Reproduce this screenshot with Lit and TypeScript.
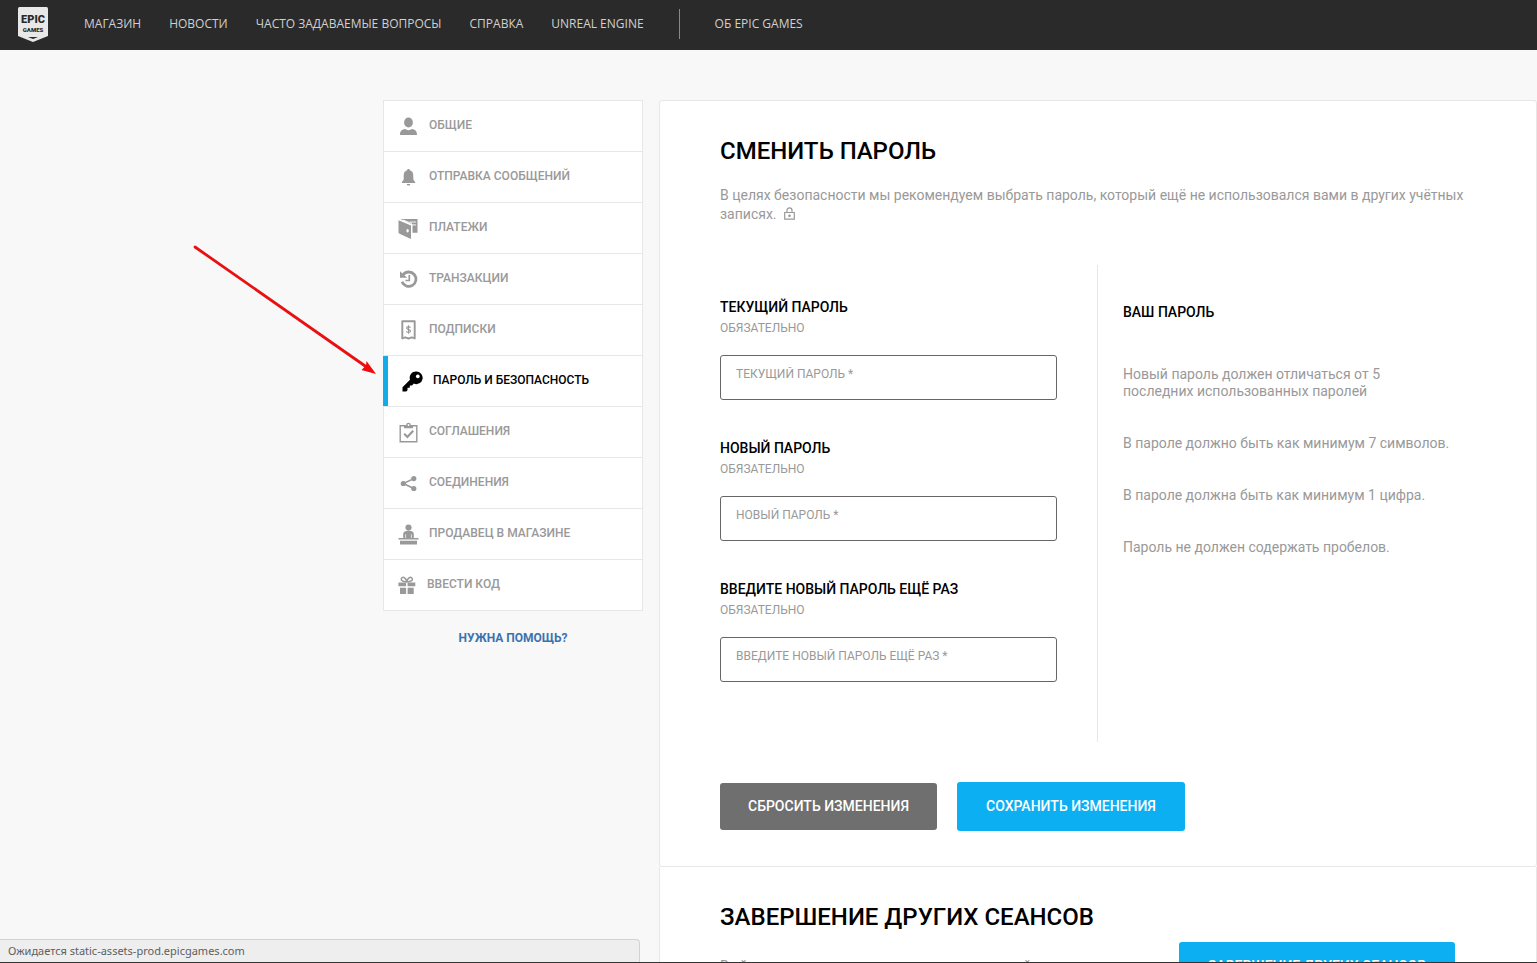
import { LitElement, html, svg, css } from "lit";
import { customElement } from "lit/decorators.js";
import { classMap } from "lit/directives/class-map.js";

const icons: Record<string, unknown> = {
  user: svg`<ellipse cx="10.5" cy="6.500" rx="4.400" ry="5"/><path d="M2 19c0-4 2.200-5.600 5-5.900 2 1.400 5 1.400 7 0 2.800.3 5 1.900 5 5.900z"/>`,
  bell: svg`<path d="M10.500 2c-.8 0-1.300.5-1.300 1.200C6.800 3.800 5.700 5.800 5.700 8.500v4L3.800 15.200v.8h13.400v-.8l-1.900-2.700v-4c0-2.700-1.100-4.700-3.500-5.300 0-.7-.5-1.200-1.300-1.200zM8.800 17h3.400c0 1-.7 1.500-1.700 1.500s-1.700-.5-1.700-1.500z"/>`,
  wallet: svg`<path d="M.5 2.300 13 7.600V21L1.500 15.800.5 14.500z"/><path d="M2.500 1h17v13.800h-5V6.600z"/><path d="M5 1.900 14 5.600M12 4h6M14 6.900h4" stroke="#fff" stroke-width=".9" fill="none"/><ellipse cx="9.600" cy="12.700" rx="1.200" ry="1.700" fill="#fff"/>`,
  history: svg`<path d="M5.200 5.600A7.200 7.200 0 1 1 4 12.700" fill="none" stroke="currentColor" stroke-width="2.800"/><path d="M2 2.300v6.500h7.200z"/><path d="M11.300 6v5.500H7.500" fill="none" stroke="currentColor" stroke-width="1.700"/>`,
  receipt: svg`<path d="M4.300 1.300h12.400v17.200l-2.800-1.200-3.400 1.200-3.400-1.200-2.800 1.200z" fill="none" stroke="currentColor" stroke-width="1.900" stroke-linejoin="round"/><path d="M12.400 7.800c-.3-.9-.9-1.200-1.900-1.200-1.200 0-1.900.5-1.900 1.400 0 2.200 3.900 1 3.900 3.100 0 .9-.8 1.400-2 1.400-1.100 0-1.800-.4-2.100-1.300M10.500 5.300v8.500" fill="none" stroke="currentColor" stroke-width="1.100"/>`,
  key: svg`<path fill-rule="evenodd" d="M14.200.5a6.300 6.300 0 1 1-2.300 12.100L10 14.500H7.800v2.300H5.500v2.400L4.200 20.500H.5v-4.200L8 8.800A6.300 6.300 0 0 1 14.200.5zm1.600 3a1.900 1.900 0 1 0 .01 0z"/>`,
  clipboard: svg`<path d="M2.200 3.700h16.600v16.100H2.200z" fill="none" stroke="currentColor" stroke-width="1.400"/><path d="M6 3h2.200a2.300 2.300 0 0 1 4.600 0H15v3.200H6z"/><circle cx="10.500" cy="3" r=".9" fill="#fff"/><path d="m6.200 11.800 3.200 3.200 5.800-6.300" fill="none" stroke="currentColor" stroke-width="2.200"/>`,
  share: svg`<circle cx="5.300" cy="10.500" r="2.600"/><circle cx="15.800" cy="5.600" r="2.600"/><circle cx="15.800" cy="15.500" r="2.600"/><path d="M15.800 5.600 5.300 10.500l10.500 5" fill="none" stroke="currentColor" stroke-width="1.600"/>`,
  seller: svg`<circle cx="10.500" cy="3.600" r="3.100"/><path d="M5.200 14.500V10c0-2 1.600-3 3.300-3h4c1.700 0 3.300 1 3.300 3v4.500z"/><path d="M7.600 10.300v4M13.400 10.300v4" stroke="#fff" stroke-width=".7"/><path d="M.5 14h20v1.600h-20zM2 16.800h17v3.700H2z"/>`,
  gift: svg`<path d="M.4 7.500h7.700v3.800H.4zM9.600 7.500h7.700v3.800H9.600zM2 12.700h6.100v6.200H2zM9.600 12.700h6.100v6.200H9.600z"/><path d="M8.800 6.900C4.500 6.900 3 5.500 3.300 3.800 3.700 1.500 7.800 1.500 8.800 6.900zm0 0c4.300 0 5.800-1.400 5.500-3.100C13.900 1.500 9.800 1.500 8.800 6.900z" fill="none" stroke="currentColor" stroke-width="1.500"/>`,
};

const navLinks = ["Магазин", "Новости", "Часто задаваемые вопросы", "Справка", "Unreal Engine"];

const menu = [
  { icon: "user", label: "Общие" },
  { icon: "bell", label: "Отправка сообщений" },
  { icon: "wallet", label: "Платежи" },
  { icon: "history", label: "Транзакции" },
  { icon: "receipt", label: "Подписки" },
  { icon: "key", label: "Пароль и безопасность", active: true },
  { icon: "clipboard", label: "Соглашения" },
  { icon: "share", label: "Соединения" },
  { icon: "seller", label: "Продавец в магазине" },
  { icon: "gift", label: "Ввести код", narrow: true },
];

const fields = [
  { id: "current", label: "Текущий пароль" },
  { id: "next", label: "Новый пароль" },
  { id: "repeat", label: "Введите новый пароль ещё раз" },
];

const rules = [
  "Новый пароль должен отличаться от 5 последних использованных паролей",
  "В пароле должно быть как минимум 7 символов.",
  "В пароле должна быть как минимум 1 цифра.",
  "Пароль не должен содержать пробелов.",
];

@customElement("site-header")
class SiteHeader extends LitElement {
  static styles = css`
    :host { display: block; }
    .bar { display: flex; align-items: center; height: 50px; padding: 0 18px 2px; background: #2a2a2a; box-sizing: border-box; }
    .logo { display: block; width: 30px; height: 36px; }
    .logo svg { display: block; }
    .links { display: flex; align-items: center; gap: 28px; margin-left: 36px; }
    .link { color: #d0d0d0; font: 500 12px/16px "Open Sans", "Noto Sans", sans-serif; text-transform: uppercase; text-decoration: none; white-space: nowrap; }
    .rule { width: 1px; height: 30px; margin: 0 7px; background: #888; }
  `;
  render() {
    return html`<header class="bar">
      <a class="logo" href="#" aria-label="Epic Games">
        <svg width="30" height="36" viewBox="0 0 30 36">
          <path d="M1.500 1h27Q30 1 30 2.500V30l-15 6L0 30V2.500Q0 1 1.500 1z" fill="#e8e8e8"/>
          <path d="M10 31h10l-5 2z" fill="#2a2a2a"/>
          <text x="15" y="17" text-anchor="middle" font-family="Roboto, sans-serif" font-weight="900" font-size="11" fill="#2a2a2a">EPIC</text>
          <text x="15" y="26" text-anchor="middle" font-family="Roboto, sans-serif" font-weight="900" font-size="6" fill="#2a2a2a">GAMES</text>
        </svg>
      </a>
      <nav class="links">
        ${navLinks.map((t) => html`<a class="link" href="#">${t}</a>`)}
        <span class="rule"></span>
        <a class="link" href="#">Об Epic Games</a>
      </nav>
    </header>`;
  }
}

@customElement("account-menu")
class AccountMenu extends LitElement {
  static styles = css`
    :host { display: block; font-family: Roboto, sans-serif; }
    .list { margin: 0; padding: 0; list-style: none; border: 1px solid #e7e7e7; background: #fff; }
    .row + .row { border-top: 1px solid #e7e7e7; }
    .item { display: flex; align-items: center; gap: 10px; height: 50px; box-sizing: border-box; padding: 0 0 2px 14px; color: #999; text-decoration: none; }
    .narrow { gap: 8px; }
    .active { color: #000; margin-left: -1px; border-left: 5px solid #12ace9; }
    .icon { width: 21px; height: 21px; fill: currentColor; flex: none; margin-top: 3px; }
    .label { font-size: 12px; font-weight: 500; line-height: 16px; text-transform: uppercase; white-space: nowrap; }
    .help { display: block; margin-top: 19px; text-align: center; color: #3b73af; font-size: 12px; font-weight: 700; line-height: 16px; text-transform: uppercase; text-decoration: none; }
  `;
  render() {
    return html`<nav>
      <ul class="list">
        ${menu.map((m) => html`<li class="row">
          <a href="#" class=${classMap({ item: true, active: !!m.active, narrow: !!m.narrow })}>
            <svg class="icon" viewBox="0 0 21 21">${icons[m.icon]}</svg><span class="label">${m.label}</span>
          </a>
        </li>`)}
      </ul>
      <a class="help" href="#">Нужна помощь?</a>
    </nav>`;
  }
}

@customElement("password-panel")
class PasswordPanel extends LitElement {
  static styles = css`
    :host { display: block; font-family: Roboto, sans-serif; }
    .card { border: 1px solid #e7e7e7; background: #fff; border-radius: 3px; padding: 35px 60px; }
    .card + .card { border-top: 0; border-radius: 0 0 3px 3px; }
    .title { margin: 0; font-size: 24px; font-weight: 500; line-height: 30px; color: #000; text-transform: uppercase; }
    .text { margin: 20px 0 0; font-size: 14px; line-height: 19px; color: #999; }
    .lock { margin-left: 4px; vertical-align: -1px; }
    .columns { display: grid; grid-template-columns: 377px 1fr; margin-top: 41px; }
    .fields { display: flex; flex-direction: column; gap: 38px; padding: 32px 40px 60px 0; }
    .field { display: flex; flex-direction: column; }
    .name { font-size: 14px; font-weight: 500; line-height: 20px; color: #000; text-transform: uppercase; }
    .required { margin-top: 2px; font-size: 12px; line-height: 18px; color: #999; text-transform: uppercase; }
    .input { margin-top: 18px; height: 45px; box-sizing: border-box; border: 1px solid #666; border-radius: 3px; padding: 0 15px 8px; background: #fff; color: #000; font: 400 12px/16px Roboto, sans-serif; outline: none; }
    .input::placeholder { color: #999; opacity: 1; text-transform: uppercase; }
    .rules { border-left: 1px solid #e7e7e7; padding: 37px 0 0 25px; }
    .list { margin: 44px 0 0; padding: 0; list-style: none; display: flex; flex-direction: column; gap: 35px; max-width: 330px; }
    .rule { font-size: 14px; line-height: 17px; color: #999; }
    .actions { display: flex; align-items: center; gap: 20px; margin-top: 40px; }
    .button { height: 49px; padding: 0 29px 1px; border: 0; border-radius: 3px; background: #0caff2; color: #fff; font: 500 14px/20px Roboto, sans-serif; text-transform: uppercase; white-space: nowrap; flex: none; }
    .reset { height: 47px; padding: 0 28px 1px; background: #6f6f6f; }
    .split { display: flex; justify-content: space-between; align-items: flex-start; gap: 60px; padding-right: 21px; }
    .split .text { margin-top: 25px; }
    .split .button { margin-top: 10px; }
  `;
  render() {
    return html`
      <section class="card">
        <h1 class="title">Сменить пароль</h1>
        <p class="text">
          В целях безопасности мы рекомендуем выбрать пароль, который ещё не использовался вами в других учётных записях.
          <svg class="lock" width="11" height="13" viewBox="0 0 11 13" fill="none" stroke="#999" stroke-width="1.200"><path d="M.7 5.500h9.600v6.700H.7zM3 5.500V3.300a2.500 2.500 0 0 1 5 0v2.200"/><circle cx="5.500" cy="8.700" r=".7" fill="#999"/></svg>
        </p>
        <form @submit=${(e: Event) => e.preventDefault()}>
          <div class="columns">
            <div class="fields">
              ${fields.map((f) => html`<div class="field">
                <label class="name" for=${f.id}>${f.label}</label>
                <span class="required">Обязательно</span>
                <input class="input" id=${f.id} type="password" placeholder="${f.label} *" />
              </div>`)}
            </div>
            <div class="rules">
              <div class="name">Ваш пароль</div>
              <ul class="list">${rules.map((r) => html`<li class="rule">${r}</li>`)}</ul>
            </div>
          </div>
          <div class="actions">
            <button class="button reset" type="reset">Сбросить изменения</button>
            <button class="button" type="submit">Сохранить изменения</button>
          </div>
        </form>
      </section>
      <section class="card">
        <h2 class="title">Завершение других сеансов</h2>
        <div class="split">
          <p class="text">Выйти из всех прочих активных сеансов своей страницы на всех устройствах.</p>
          <button class="button" type="button">Завершение других сеансов</button>
        </div>
      </section>`;
  }
}

@customElement("app-root")
class AppRoot extends LitElement {
  static styles = css`
    :host { display: flex; flex-direction: column; position: relative; height: 100vh; overflow: hidden; box-sizing: border-box; background: #f8f8f8; border-bottom: 1px solid #333; }
    .page { display: grid; grid-template-columns: 260px 1fr; align-items: start; gap: 16px; flex: 1; min-height: 0; padding: 50px 0 0 383px; }
    .arrow { position: absolute; left: 190px; top: 240px; pointer-events: none; }
    .status { position: absolute; left: 0; bottom: 0; width: 640px; height: 23px; box-sizing: border-box; padding: 2px 8px 0; border: 1px solid #d2d2d2; border-width: 1px 1px 0 0; border-radius: 0 4px 0 0; background: #eee; color: #5c605f; font: 11px/17px "Noto Sans", "Open Sans", sans-serif; }
  `;
  render() {
    return html`
      <site-header></site-header>
      <main class="page">
        <account-menu></account-menu>
        <password-panel></password-panel>
      </main>
      <svg class="arrow" width="190" height="140" viewBox="0 0 190 140">
        <path d="M5 7 178 128" stroke="#e81010" stroke-width="2.800" stroke-linecap="round"/>
        <path d="M186 134 176.500 121 176 125.500 171.500 130z" fill="#f00a0a"/>
      </svg>
      <div class="status">Ожидается static-assets-prod.epicgames.com</div>`;
  }
}
